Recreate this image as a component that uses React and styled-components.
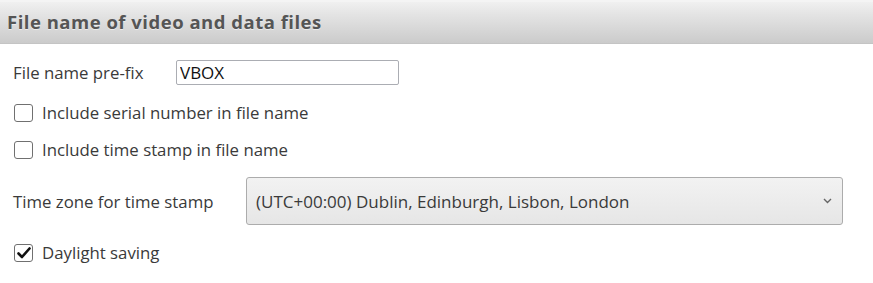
import React, { useState } from 'react';
import styled, { createGlobalStyle } from 'styled-components';

const GlobalStyle = createGlobalStyle`
	html, body {
		margin: 0;
		padding: 0;
		background: #ffffff;
	}
	body {
		font-family: 'Open Sans', 'Noto Sans', sans-serif;
	}
`;

const Panel = styled.section`
	width: 873px;
	height: 283px;
	background: #ffffff;
	display: flex;
	flex-direction: column;
`;

const Header = styled.header`
	height: 44px;
	box-sizing: border-box;
	display: flex;
	align-items: center;
	padding: 0 0 2px 7px;
	background: linear-gradient(to bottom, #f0f0f0 0%, #e4e4e4 30%, #cbcbcb 100%);
	border-top: 2px solid #f4f4f4;
	border-bottom: 1px solid #c4c4c4;
`;

const Title = styled.h2`
	margin: 0;
	font-size: 18.5px;
	font-weight: 700;
	letter-spacing: 0.5px;
	color: #555555;
	text-shadow: 0 1px 0 rgba(255, 255, 255, 0.5);
`;

const Form = styled.div`
	display: flex;
	flex-direction: column;
	gap: 18px;
	padding: 16px 0 0 13px;
`;

const Row = styled.div`
	display: flex;
	align-items: center;
	height: ${(props) => props.height || 19}px;
`;

const Label = styled.span`
	width: ${(props) => props.width}px;
	font-size: 16.8px;
	color: #3a3a3a;
	white-space: nowrap;
`;

const TextInput = styled.input`
	width: 223px;
	height: 25px;
	box-sizing: border-box;
	border: 1px solid #abadb3;
	border-radius: 2px;
	padding: 0 0 0 3px;
	font-family: inherit;
	font-size: 17px;
	color: #111111;
	outline: none;
`;

const CheckRow = styled.label`
	display: flex;
	align-items: center;
	gap: 9px;
	height: 19px;
	margin-left: 1px;
	cursor: pointer;
	font-size: 16.8px;
	color: #3a3a3a;
`;

const Box = styled.span`
	flex: none;
	width: 19px;
	height: 18px;
	box-sizing: border-box;
	border: 1.5px solid #707070;
	border-radius: 3px;
	background: #ffffff;
	display: flex;
	align-items: center;
	justify-content: center;
`;

const Select = styled.div`
	width: 597px;
	height: 48px;
	box-sizing: border-box;
	border: 1px solid #acacac;
	border-radius: 3px;
	background: linear-gradient(to bottom, #f2f2f2 0%, #e6e6e6 100%);
	display: flex;
	align-items: center;
	justify-content: space-between;
	padding: 0 10px 0 9px;
	font-size: 17px;
	color: #3a3a3a;
	cursor: pointer;
`;

const Checkbox = ({ checked, onToggle, children }) => (
	<CheckRow onClick={onToggle}>
		<Box>
			{checked && (
				<svg width="14" height="12" viewBox="0 0 14 12">
					<path d="M1.5 6.5 L5 10 L12.5 1.5" fill="none" stroke="#111" strokeWidth="2.6" strokeLinecap="round" strokeLinejoin="round" />
				</svg>
			)}
		</Box>
		{children}
	</CheckRow>
);

export default function App() {
	const [prefix, setPrefix] = useState('VBOX');
	const [serial, setSerial] = useState(false);
	const [stamp, setStamp] = useState(false);
	const [daylight, setDaylight] = useState(true);

	return (
		<>
			<GlobalStyle />
			<Panel>
				<Header>
					<Title>File name of video and data files</Title>
				</Header>
				<Form>
					<Row height={25}>
						<Label width={163}>File name pre-fix</Label>
						<TextInput value={prefix} onChange={(e) => setPrefix(e.target.value)} />
					</Row>
					<Checkbox checked={serial} onToggle={() => setSerial(!serial)}>
						Include serial number in file name
					</Checkbox>
					<Checkbox checked={stamp} onToggle={() => setStamp(!stamp)}>
						Include time stamp in file name
					</Checkbox>
					<Row height={48}>
						<Label width={233}>Time zone for time stamp</Label>
						<Select>
							<span>(UTC+00:00) Dublin, Edinburgh, Lisbon, London</span>
							<svg width="9" height="6" viewBox="0 0 9 6">
								<path d="M1 1 L4.5 4.5 L8 1" fill="none" stroke="#666" strokeWidth="1.4" />
							</svg>
						</Select>
					</Row>
					<Checkbox checked={daylight} onToggle={() => setDaylight(!daylight)}>
						Daylight saving
					</Checkbox>
				</Form>
			</Panel>
		</>
	);
}
